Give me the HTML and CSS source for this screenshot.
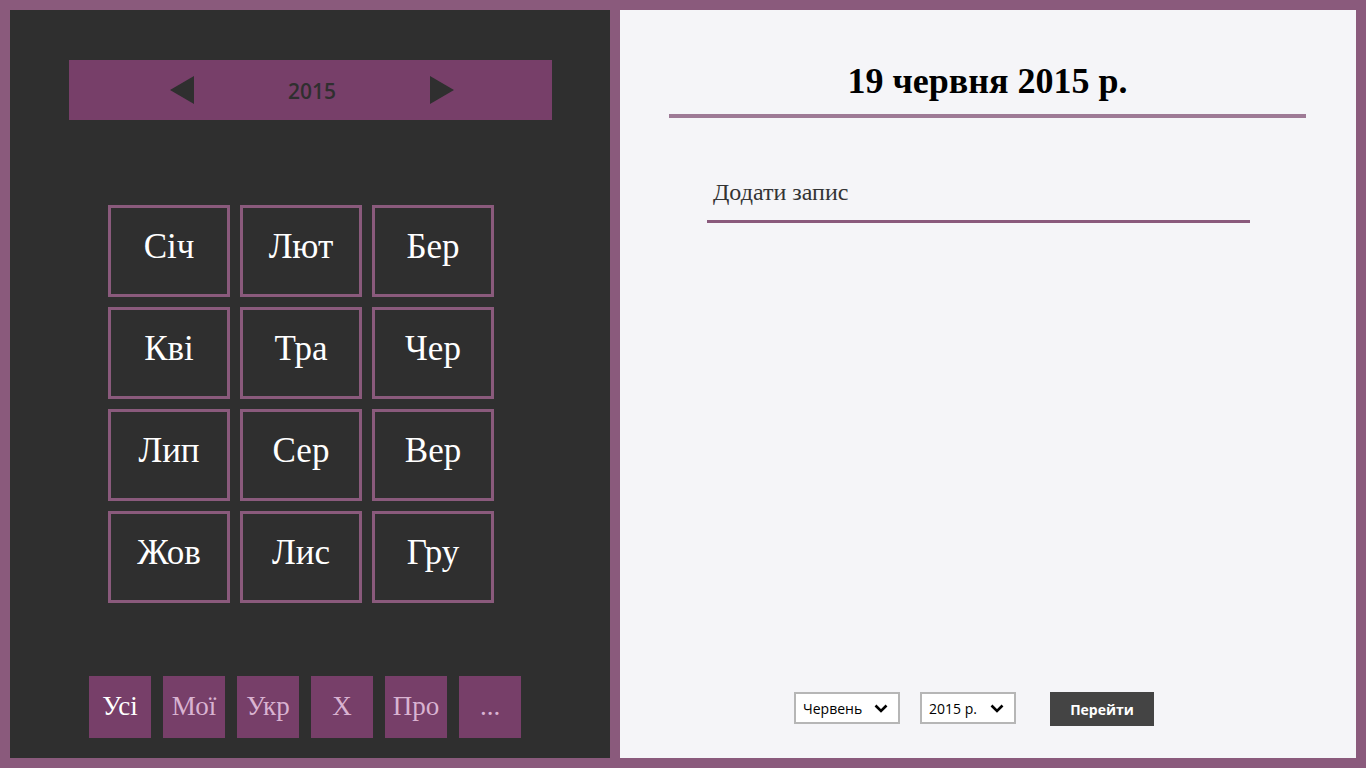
FILE: index.html
```html
<!DOCTYPE html>
<html lang="uk">
<head>
<meta charset="utf-8">
<title>Календар</title>
<link rel="stylesheet" href="styles.css">
</head>
<body>
<div class="app">
  <aside class="left">
    <div class="yearbar">
      <svg class="arrow" width="24" height="28" viewBox="0 0 24 28"><polygon points="24,0 24,28 0,14" fill="#2f2f2f"/></svg>
      <span class="year">2015</span>
      <svg class="arrow" width="24" height="28" viewBox="0 0 24 28"><polygon points="0,0 0,28 24,14" fill="#2f2f2f"/></svg>
    </div>
    <div class="months">
      <div class="month">Січ</div>
      <div class="month">Лют</div>
      <div class="month">Бер</div>
      <div class="month">Кві</div>
      <div class="month">Тра</div>
      <div class="month">Чер</div>
      <div class="month">Лип</div>
      <div class="month">Сер</div>
      <div class="month">Вер</div>
      <div class="month">Жов</div>
      <div class="month">Лис</div>
      <div class="month">Гру</div>
    </div>
    <div class="filters">
      <div class="filter active">Усі</div>
      <div class="filter">Мої</div>
      <div class="filter">Укр</div>
      <div class="filter">Х</div>
      <div class="filter">Про</div>
      <div class="filter">...</div>
    </div>
  </aside>
  <main class="right">
    <h1 class="title">19 червня 2015 р.</h1>
    <div class="entry">Додати запис</div>
    <div class="spacer"></div>
    <div class="controls">
      <div class="select sel-month"><span>Червень</span><svg width="14" height="9" viewBox="0 0 14 9"><polyline points="1.5,1.5 7,7 12.5,1.5" fill="none" stroke="#000" stroke-width="2.6"/></svg></div>
      <div class="select sel-year"><span>2015 р.</span><svg width="14" height="9" viewBox="0 0 14 9"><polyline points="1.5,1.5 7,7 12.5,1.5" fill="none" stroke="#000" stroke-width="2.6"/></svg></div>
      <div class="go">Перейти</div>
    </div>
  </main>
</div>
</body>
</html>
```
FILE: styles.css
```css
html, body {
  margin: 0;
  padding: 0;
}
body {
  background: #8a5a7c;
  width: 1366px;
  height: 768px;
  overflow: hidden;
}
.app {
  display: flex;
  gap: 10px;
  padding: 10px;
  height: 748px;
}
.left {
  width: 600px;
  height: 748px;
  background: #2f2f2f;
  display: flex;
  flex-direction: column;
  box-sizing: border-box;
}
.yearbar {
  margin: 50px 0 0 59px;
  width: 483px;
  height: 60px;
  background: #773f69;
  display: flex;
  align-items: center;
  justify-content: center;
  box-sizing: border-box;
  padding-left: 3px;
}
.arrow {
  display: block;
}
.year {
  font-family: "Open Sans", "Noto Sans", sans-serif;
  font-size: 21px;
  font-weight: 600;
  color: #2f2f2f;
  width: 236px;
  text-align: center;
  margin-top: 2px;
}
.months {
  margin: 85px 0 0 98px;
  display: grid;
  grid-template-columns: repeat(3, 122px);
  grid-auto-rows: 92px;
  gap: 10px;
}
.month {
  border: 3px solid #8a5a7c;
  box-sizing: border-box;
  display: flex;
  align-items: center;
  justify-content: center;
  color: #ffffff;
  font-family: "Liberation Serif", "Times New Roman", serif;
  font-size: 35px;
  padding-bottom: 8px;
}
.filters {
  margin: 73px 0 0 79px;
  display: flex;
  gap: 12px;
}
.filter {
  width: 62px;
  height: 62px;
  background: #773f69;
  display: flex;
  align-items: center;
  justify-content: center;
  font-family: "Liberation Serif", "Times New Roman", serif;
  font-size: 27px;
  color: #d9b3d1;
  padding-bottom: 1px;
  box-sizing: border-box;
}
.filter.active {
  color: #ffffff;
}
.right {
  width: 736px;
  height: 748px;
  background: #f5f5f8;
  display: flex;
  flex-direction: column;
}
.title {
  margin: 50px 50px 0 49px;
  padding-bottom: 12px;
  border-bottom: 4px solid #9e7a96;
  text-align: center;
  font-family: "Liberation Serif", "Times New Roman", serif;
  font-weight: bold;
  font-size: 36px;
  line-height: 42px;
  color: #000;
}
.entry {
  margin: 60px 0 0 87px;
  width: 543px;
  border-bottom: 3px solid #8a5a7c;
  box-sizing: border-box;
  padding: 0 0 14px 6px;
  font-family: "Liberation Serif", "Times New Roman", serif;
  font-size: 24px;
  line-height: 28px;
  color: #333;
}
.spacer {
  flex: 1;
}
.controls {
  margin: 0 0 32px 174px;
  display: flex;
  align-items: flex-start;
}
.select {
  height: 32px;
  border: 2px solid #b6b6b6;
  background: #fff;
  box-sizing: border-box;
  display: flex;
  align-items: center;
  justify-content: space-between;
  padding: 0 10px 0 7px;
  font-family: "Open Sans", "Noto Sans", sans-serif;
  font-size: 14px;
  color: #000;
}
.sel-month {
  width: 106px;
}
.sel-year {
  width: 96px;
  margin-left: 20px;
}
.go {
  margin-left: 34px;
  width: 104px;
  height: 34px;
  background: #444;
  color: #fff;
  font-family: "Open Sans", "Noto Sans", sans-serif;
  font-weight: bold;
  font-size: 14px;
  display: flex;
  align-items: center;
  justify-content: center;
}
```
